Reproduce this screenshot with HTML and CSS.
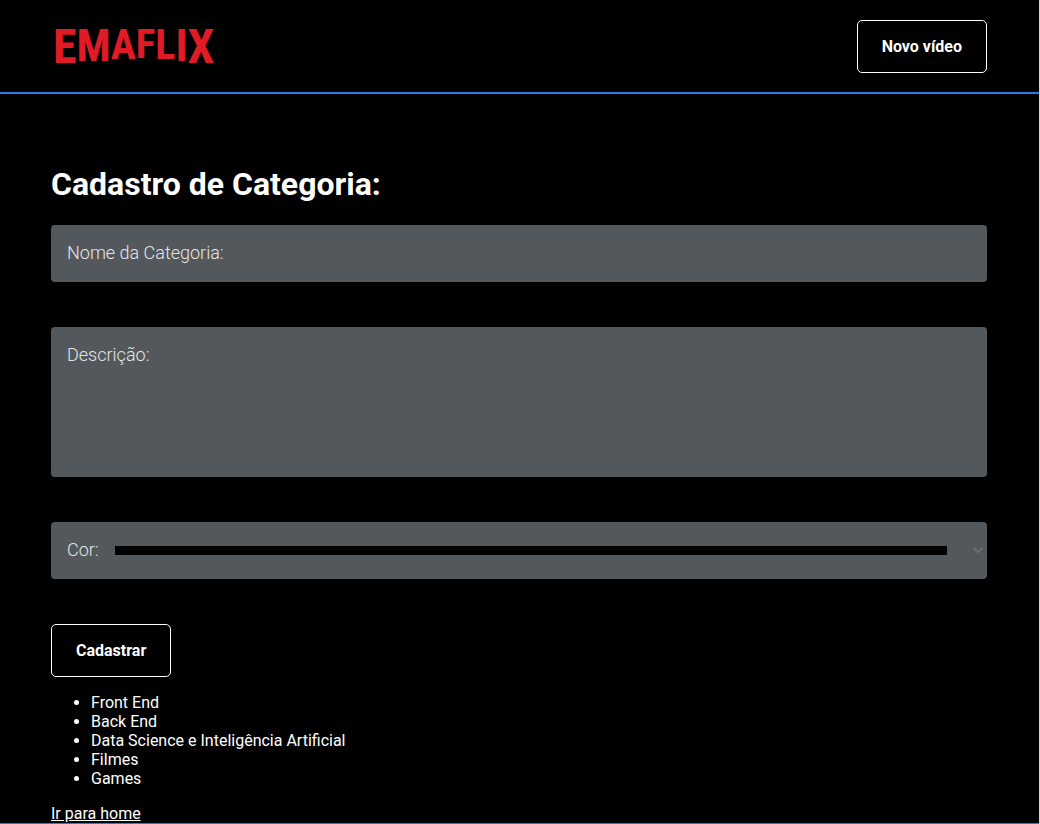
FILE: index.html
```html
<!DOCTYPE html>
<html lang="pt-BR">
<head>
<meta charset="utf-8">
<meta name="viewport" content="width=device-width, initial-scale=1">
<title>Emaflix - Cadastro de Categoria</title>
<link rel="stylesheet" href="styles.css">
</head>
<body>
<div class="page">
  <header class="menu">
    <a class="logo-link" href="#home" aria-label="Emaflix">
      <svg class="logo" width="170" height="60" viewBox="0 0 170 60" aria-hidden="true">
        <text class="logo-text" x="2" y="47"><tspan font-size="48">E</tspan><tspan font-size="45" y="45">M</tspan><tspan font-size="42" y="43">A</tspan><tspan font-size="41" y="42">F</tspan><tspan font-size="42" y="43">L</tspan><tspan font-size="45" y="45">I</tspan><tspan font-size="48" y="47">X</tspan></text>
      </svg>
    </a>
    <a class="button" href="#novo-video">Novo vídeo</a>
  </header>
  <main class="content">
    <h1 class="title">Cadastro de Categoria:</h1>
    <form>
      <div class="field">
        <label class="field-label" for="nome">Nome da Categoria:</label>
        <input class="field-input" id="nome" type="text">
      </div>
      <div class="field">
        <label class="field-label" for="descricao">Descrição:</label>
        <textarea class="field-input field-area" id="descricao"></textarea>
      </div>
      <div class="field color-field">
        <label class="color-label" for="cor">Cor:</label>
        <input class="color-input" id="cor" type="color" value="#000000">
        <svg class="chevron" width="10" height="10" viewBox="0 0 10 10" aria-hidden="true"><path d="M1 2l4 4 4-4"/></svg>
      </div>
      <button class="button" type="button">Cadastrar</button>
    </form>
    <ul class="categories">
      <li>Front End</li>
      <li>Back End</li>
      <li>Data Science e Inteligência Artificial</li>
      <li>Filmes</li>
      <li>Games</li>
    </ul>
    <a class="home-link" href="#home">Ir para home</a>
  </main>
  <footer class="footer"></footer>
</div>
</body>
</html>
```
FILE: styles.css
```css
* { box-sizing: border-box; }

body {
  margin: 0;
  background: #000;
  color: #fff;
  font: 16px/19px Roboto, sans-serif;
}

.page {
  min-height: 100vh;
  border-right: 1px solid #d4d4d4;
}

.menu {
  display: flex;
  align-items: center;
  justify-content: space-between;
  height: 94px;
  padding: 0 52px 0 51px;
  border-bottom: 2px solid #2a7ae4;
}

.logo-link,
.logo { display: block; }

.logo { overflow: visible; }

.logo-text {
  font-family: "Liberation Sans Narrow", "Roboto Condensed", "Liberation Sans", sans-serif;
  font-weight: bold;
  fill: #e11b26;
}

.button {
  display: inline-block;
  padding: 16px 24px;
  border: 1px solid #fff;
  border-radius: 5px;
  background: #000;
  color: #fff;
  font: bold 16px/19px Roboto, sans-serif;
  text-decoration: none;
  cursor: pointer;
}

.content { padding: 50px 52px 0 51px; }

.title {
  margin: 21px 0 22px;
  font-size: 32px;
  line-height: 38px;
}

.field {
  position: relative;
  margin-bottom: 45px;
}

.field-label,
.color-label {
  color: #e5e5e5;
  font-size: 18px;
  font-weight: 300;
  line-height: 22px;
}

.field-label {
  position: absolute;
  top: 17px;
  left: 16px;
}

.field-input {
  display: block;
  width: 100%;
  height: 57px;
  padding: 16px;
  border: 0;
  border-radius: 4px;
  background: #53585d;
  color: #f5f5f5;
  font: 18px/22px Roboto, sans-serif;
  resize: none;
}

.field-area { height: 150px; }

.color-field {
  display: flex;
  align-items: center;
  height: 57px;
  padding: 0 4px 0 16px;
  border-radius: 4px;
  background: #53585d;
}

.color-label { padding-bottom: 1px; }

.color-input {
  flex: 1;
  min-width: 0;
  height: 9px;
  margin: 0 26px 0 16px;
  padding: 0;
  border: 0;
  background: #000;
  appearance: none;
}

.color-input::-webkit-color-swatch-wrapper { padding: 0; }
.color-input::-webkit-color-swatch { border: 0; }

.chevron {
  fill: none;
  stroke: #6b6f73;
  stroke-width: 2;
}

.categories {
  margin: 16px 0;
  padding-left: 40px;
}

.home-link {
  display: block;
  width: fit-content;
  color: #fff;
}

.footer { border-top: 1px solid #2a7ae4; }
```
